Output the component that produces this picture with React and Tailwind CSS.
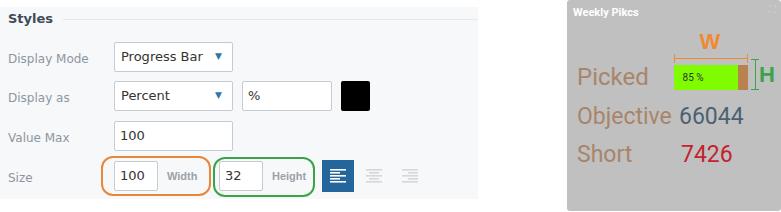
import { useState } from 'react';

function AlignIcon({ mode, color }) {
  const widths = [16, 10, 16, 10, 16];
  return (
    <svg width="16" height="16" viewBox="0 0 16 16">
      {widths.map((w, i) => {
        const x = mode === 'left' ? 0 : mode === 'center' ? (16 - w) / 2 : 16 - w;
        return <rect key={i} x={x} y={1 + i * 3} width={w} height="1.6" fill={color} />;
      })}
    </svg>
  );
}

function Select({ value }) {
  return (
    <div className="flex h-[30px] w-[119px] items-center justify-between rounded-[2px] border border-[#c6cbd0] bg-white pl-[6px] pr-[10px] text-[13px] text-[#333]">
      <span>{value}</span>
      <span className="text-[9px] text-[#2f77a8]">▼</span>
    </div>
  );
}

function Field({ value, className }) {
  return (
    <div className={`flex h-[30px] items-center rounded-[2px] border border-[#c6cbd0] bg-white pl-[5px] text-[13px] text-[#333] ${className}`}>
      {value}
    </div>
  );
}

function Row({ label, children }) {
  return (
    <div className="flex h-[30px] items-center">
      <div className="w-[114px] pl-[8px] pt-[4px] text-[12px] text-[#8d969e]">{label}</div>
      {children}
    </div>
  );
}

export default function App() {
  const [align, setAlign] = useState('left');
  const hint = { fontFamily: '"Liberation Sans", Arial, sans-serif' };

  return (
    <div className="flex h-[212px] w-[781px] bg-white" style={{ fontFamily: '"DejaVu Sans", Verdana, sans-serif' }}>
      <div className="mt-[7px] h-[192px] w-[478px] bg-[#f7f8fa]">
        <div className="flex h-[24px] items-center pl-[8px]">
          <span className="text-[13px] font-bold text-[#3e4b56]">Styles</span>
          <div className="ml-[10px] h-px flex-1 bg-[#e4e8ec]" />
        </div>
        <div className="mt-[11px] flex flex-col gap-[9px]">
          <Row label="Display Mode">
            <Select value="Progress Bar" />
          </Row>
          <Row label="Display as">
            <Select value="Percent" />
            <Field value="%" className="ml-[9px] w-[90px]" />
            <div className="ml-[9px] h-[30px] w-[29px] rounded-[2px] bg-black" />
          </Row>
          <div className="mt-px">
            <Row label="Value Max">
              <Field value="100" className="w-[119px]" />
            </Row>
          </div>
          <div className="mt-px">
            <Row label="Size">
              <div className="relative flex w-[105px] items-center">
                <div className="absolute left-[-13px] top-[-5px] h-[40px] w-[110px] rounded-[12px] border-2 border-[#e8873a]" />
                <Field value="100" className="w-[44px]" />
                <span className="ml-[9px] text-[11px] font-bold text-[#9aa2a9]" style={hint}>Width</span>
              </div>
              <div className="relative flex w-[103px] items-center">
                <div className="absolute left-[-6px] top-[-4px] h-[40px] w-[102px] rounded-[12px] border-2 border-[#3aa548]" />
                <Field value="32" className="w-[44px]" />
                <span className="ml-[9px] text-[11px] font-bold text-[#9aa2a9]" style={hint}>Height</span>
              </div>
              <div className="flex items-center gap-[4px]">
                {['left', 'center', 'right'].map((m) => (
                  <button
                    key={m}
                    onClick={() => setAlign(m)}
                    className={`flex h-[32px] w-[32px] items-center justify-center ${align === m ? 'bg-[#24669c]' : ''}`}
                  >
                    <AlignIcon mode={m} color={align === m ? '#ffffff' : '#d5d8db'} />
                  </button>
                ))}
              </div>
            </Row>
          </div>
        </div>
      </div>

      <div className="ml-[89px] flex h-[211px] w-[214px] flex-col rounded-[3px] bg-[#c0c0c0] px-[6px]" style={{ fontFamily: 'Roboto, "Open Sans", sans-serif' }}>
        <div className="flex items-start justify-between pt-[5px]">
          <span className="text-[11px] font-bold text-white">Weekly Pikcs</span>
          <span className="text-[9px] leading-none text-[#d4d4d4]">⛶</span>
        </div>
        <div className="mt-[9px] flex items-end">
          <span className="w-[105px] pb-[1px] pl-[4px] text-[24px] leading-none text-[#a8856a]">Picked</span>
          <div className="flex flex-col">
            <span className="ml-[26px] text-[22px] font-bold leading-none text-[#ef8a32]" style={hint}>W</span>
            <div className="relative mt-[1px] h-[9px] w-[74px]">
              <div className="absolute left-0 right-0 top-[4px] h-px bg-[#ef8a32]" />
              <div className="absolute left-0 top-0 h-[9px] w-px bg-[#ef8a32]" />
              <div className="absolute right-0 top-0 h-[9px] w-px bg-[#ef8a32]" />
            </div>
            <div className="mt-[2px] flex h-[25px] w-[74px]">
              <div className="flex w-[64px] items-center bg-[#7ffc00] pl-[9px] text-[10px] text-[#333]">85 %</div>
              <div className="w-[10px] bg-[#b8814f]" />
            </div>
          </div>
          <div className="relative ml-[3px] h-[31px] w-[9px]">
            <div className="absolute left-[4px] top-0 h-full w-px bg-[#3aa548]" />
            <div className="absolute left-0 top-0 h-px w-full bg-[#3aa548]" />
            <div className="absolute bottom-0 left-0 h-px w-full bg-[#3aa548]" />
          </div>
          <span className="mb-[4px] text-[22px] font-bold leading-none text-[#3aa548]" style={hint}>H</span>
        </div>
        <div className="mt-[8px] flex items-center text-[23px] leading-[38px]">
          <span className="w-[106px] pl-[4px] text-[#a8856a]">Objective</span>
          <span className="text-[#4c6172]">66044</span>
        </div>
        <div className="flex items-center text-[23px] leading-[38px]">
          <span className="w-[108px] pl-[4px] text-[#a8856a]">Short</span>
          <span className="text-[#c4222f]">7426</span>
        </div>
      </div>
    </div>
  );
}
